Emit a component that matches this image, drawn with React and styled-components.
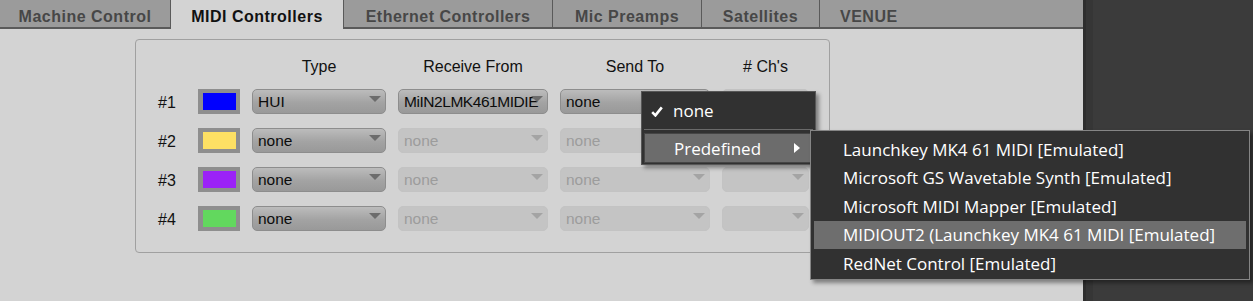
import React from 'react'
import styled, { createGlobalStyle } from 'styled-components'

const GlobalStyle = createGlobalStyle`
  html, body {
    margin: 0;
    padding: 0;
    background: #3a3a3a;
  }
  body {
    font-family: "Liberation Sans", Arial, sans-serif;
  }
`

const tabs = [
  { label: 'Machine Control', width: 171 },
  { label: 'MIDI Controllers', width: 174, active: true },
  { label: 'Ethernet Controllers', width: 209 },
  { label: 'Mic Preamps', width: 149 },
  { label: 'Satellites', width: 118 },
  { label: 'VENUE', width: 90, last: true }
]

const rows = [
  { id: 1, color: '#0000ff', type: 'HUI', receive: 'MiIN2LMK461MIDIE', send: 'none', enabled: true },
  { id: 2, color: '#fde064', type: 'none', receive: 'none', send: 'none' },
  { id: 3, color: '#9b22f7', type: 'none', receive: 'none', send: 'none' },
  { id: 4, color: '#62d85e', type: 'none', receive: 'none', send: 'none' }
]

const devices = [
  'Launchkey MK4 61 MIDI [Emulated]',
  'Microsoft GS Wavetable Synth [Emulated]',
  'Microsoft MIDI Mapper [Emulated]',
  'MIDIOUT2 (Launchkey MK4 61 MIDI [Emulated]',
  'RedNet Control [Emulated]'
]

const Dropdown = ({ value, disabled }) => (
  <Select $disabled={disabled}>
    <SelectText $tight={value.length > 10}>{value}</SelectText>
    <Arrow $disabled={disabled} />
  </Select>
)

const App = () => {
  return (
    <Page>
      <GlobalStyle />
      <Main>
        <TabBar>
          {tabs.map((t) => (
            <Tab key={t.label} $width={t.width} $active={t.active} $last={t.last}>
              {t.label}
            </Tab>
          ))}
        </TabBar>

        <Content>
          <GroupBox>
            <Grid>
              <span />
              <span />
              <HeaderCell>Type</HeaderCell>
              <HeaderCell>Receive From</HeaderCell>
              <HeaderCell>Send To</HeaderCell>
              <HeaderCell># Ch's</HeaderCell>

              {rows.map((r) => (
                <React.Fragment key={r.id}>
                  <RowLabel>#{r.id}</RowLabel>
                  <Swatch>
                    <SwatchFill $color={r.color} />
                  </Swatch>
                  <Dropdown value={r.type} />
                  <Dropdown value={r.receive} disabled={!r.enabled} />
                  <Dropdown value={r.send} disabled={!r.enabled} />
                  <Dropdown value="" disabled />
                </React.Fragment>
              ))}
            </Grid>
          </GroupBox>
        </Content>
      </Main>

      <SidePanel />

      <Menu>
        <MenuItem $height={35}>
          <Check viewBox="0 0 12 11">
            <path d="M1.2 6.2 L4.4 9.4 L10.8 1.4" fill="none" stroke="#ffffff" strokeWidth="2.6" />
          </Check>
          none
        </MenuItem>
        <Separator />
        <MenuItem $height={30} $active>
          Predefined
          <SubArrow viewBox="0 0 6 10">
            <polygon points="0,0 6,5 0,10" fill="#ffffff" />
          </SubArrow>
        </MenuItem>
      </Menu>

      <SubMenu>
        {devices.map((d, i) => (
          <SubItem key={d} $active={i === 3}>
            {d}
          </SubItem>
        ))}
      </SubMenu>
    </Page>
  )
}

export default App

const Page = styled.div`
  position: relative;
  display: flex;
  width: 1253px;
  height: 301px;
  overflow: hidden;
`

const Main = styled.div`
  width: 1083px;
  display: flex;
  flex-direction: column;
  background: #d3d3d3;
`

const TabBar = styled.div`
  display: flex;
  align-items: flex-start;
  height: 27px;
  background: #9b9b9b;
  border-bottom: 2px solid #5a5a5a;
`

const Tab = styled.div`
  box-sizing: border-box;
  width: ${(p) => p.$width}px;
  height: ${(p) => (p.$active ? 29 : 27)}px;
  display: flex;
  align-items: center;
  justify-content: ${(p) => (p.$last ? 'flex-start' : 'center')};
  padding: ${(p) => (p.$last ? '7px 0 0 20px' : '7px 0 0 0')};
  ${(p) => (p.$active ? 'padding-bottom: 2px;' : '')}
  background: ${(p) => (p.$active ? '#d3d3d3' : 'transparent')};
  border-right: ${(p) => (p.$last ? 'none' : '1px solid #5a5a5a')};
  ${(p) => (p.$active ? 'border-left: 1px solid #5a5a5a; margin-left: -1px; z-index: 1;' : '')}
  font-size: 16px;
  font-weight: 700;
  letter-spacing: 0.5px;
  color: ${(p) => (p.$active ? '#111111' : '#474747')};
  white-space: nowrap;
`

const Content = styled.div`
  flex: 1;
  padding: 10px 0 0 135px;
`

const GroupBox = styled.div`
  box-sizing: border-box;
  width: 695px;
  height: 214px;
  border: 1px solid #a0a0a0;
  border-radius: 4px;
  padding: 19px 0 0 22px;
`

const Grid = styled.div`
  display: grid;
  grid-template-columns: 28px 42px 134px 150px 150px 87px;
  grid-template-rows: 17px repeat(4, 25px);
  column-gap: 12px;
  row-gap: 14px;
  align-items: center;
  margin-top: -1px;
`

const HeaderCell = styled.div`
  text-align: center;
  font-size: 16px;
  line-height: 16px;
  color: #111111;
`

const RowLabel = styled.div`
  font-size: 16px;
  color: #111111;
  margin-top: 2px;
`

const Swatch = styled.div`
  box-sizing: border-box;
  height: 25px;
  padding: 4px 4px 4px 5px;
  background: #8e8e8e;
`

const SwatchFill = styled.div`
  width: 100%;
  height: 100%;
  background: ${(p) => p.$color};
`

const Select = styled.div`
  box-sizing: border-box;
  height: 25px;
  display: flex;
  align-items: center;
  padding: 0 4px 0 5px;
  border-radius: 5px;
  border: 1px solid ${(p) => (p.$disabled ? '#c3c3c3' : '#8d8d8d')};
  background: ${(p) =>
    p.$disabled ? '#c4c4c4' : 'linear-gradient(#bcbcbc, #a3a3a3 55%, #999999)'};
  color: ${(p) => (p.$disabled ? '#9c9c9c' : '#0c0c0c')};
  font-size: 15.5px;
  overflow: hidden;
`

const SelectText = styled.span`
  flex: 1 0 auto;
  white-space: nowrap;
  padding-top: 1px;
  letter-spacing: ${(p) => (p.$tight ? '-0.45px' : '0')};
`

const Arrow = styled.span`
  align-self: flex-start;
  flex-shrink: 0;
  margin: 6px 0 0 -12px;
  width: 0;
  height: 0;
  border-left: 6px solid transparent;
  border-right: 6px solid transparent;
  border-top: 6px solid ${(p) => (p.$disabled ? '#a4a4a4' : '#6c6c6c')};
`

const SidePanel = styled.div`
  flex: 1;
  background: linear-gradient(90deg, #2e2e2e 0, #2e2e2e 3px, #363636 3px, #363636 10px, #3b3b3b 10px);
`

const Menu = styled.div`
  position: absolute;
  left: 641px;
  top: 91px;
  box-sizing: border-box;
  width: 175px;
  height: 74px;
  padding: 1px 2px;
  background: #313131;
  border: 1px solid #575757;
  box-shadow: 3px 3px 4px rgba(0, 0, 0, 0.4);
  font-family: "Open Sans", "Noto Sans", sans-serif;
  z-index: 2;
`

const MenuItem = styled.div`
  display: flex;
  align-items: center;
  height: ${(p) => p.$height}px;
  padding-left: 29px;
  position: relative;
  box-sizing: border-box;
  background: ${(p) => (p.$active ? '#6c6c6c' : 'transparent')};
  ${(p) => (p.$active ? 'border: 1px solid #454545;' : '')}
  color: #ffffff;
  font-size: 17px;
`

const Check = styled.svg`
  position: absolute;
  left: 7px;
  top: 13px;
  width: 12px;
  height: 11px;
`

const SubArrow = styled.svg`
  position: absolute;
  right: 12px;
  top: 9px;
  width: 6px;
  height: 10px;
`

const Separator = styled.div`
  height: 1px;
  margin: 1px 0 3px;
  background: #6a6a6a;
`

const SubMenu = styled.div`
  position: absolute;
  left: 810px;
  top: 130px;
  box-sizing: border-box;
  width: 440px;
  height: 150px;
  padding: 4px 3px 3px;
  background: #313131;
  border: 1px solid #858585;
  box-shadow: 3px 3px 4px rgba(0, 0, 0, 0.4);
  font-family: "Open Sans", "Noto Sans", sans-serif;
  z-index: 3;
`

const SubItem = styled.div`
  height: 28.5px;
  display: flex;
  align-items: center;
  padding-left: 29px;
  background: ${(p) => (p.$active ? '#6e6e6e' : 'transparent')};
  color: #ffffff;
  font-size: 17px;
  white-space: nowrap;
`
